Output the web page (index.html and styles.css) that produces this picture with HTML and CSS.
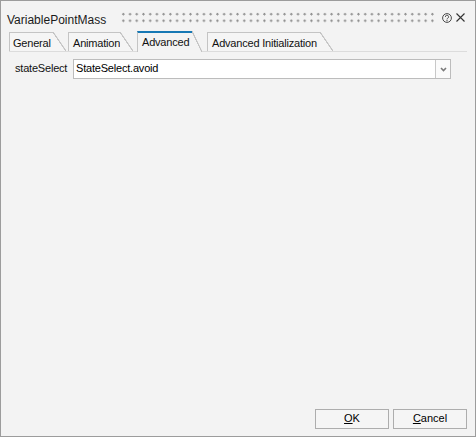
FILE: index.html
```html
<!DOCTYPE html>
<html>
<head>
<meta charset="utf-8">
<link rel="stylesheet" href="styles.css">
</head>
<body>
<div class="window">
  <div class="titlebar">
    <div class="title">VariablePointMass</div>
    <div class="grip"></div>
    <svg class="help" width="10" height="10" viewBox="0 0 10 10">
      <circle cx="5" cy="5" r="4.4" fill="none" stroke="#4a4a4a" stroke-width="1"/>
      <path d="M3.4 3.9 A1.6 1.6 0 1 1 5.6 5.3 C5.1 5.6 5 5.9 5 6.4" fill="none" stroke="#4a4a4a" stroke-width="1"/>
      <circle cx="5" cy="7.7" r="0.65" fill="#4a4a4a"/>
    </svg>
    <svg class="close" width="9" height="9" viewBox="0 0 9 9">
      <path d="M0.5 0.5 L8.5 8.5 M8.5 0.5 L0.5 8.5" stroke="#333" stroke-width="1.1" fill="none"/>
    </svg>
  </div>
  <div class="tabs">
    <div class="tab tab-general">General</div>
    <div class="tab tab-animation">Animation</div>
    <div class="tab tab-advanced selected">Advanced</div>
    <div class="tab tab-init">Advanced Initialization</div>
  </div>
  <div class="content">
    <div class="field">
      <div class="label">stateSelect</div>
      <div class="combo">
        <div class="combo-text">StateSelect.avoid</div>
        <div class="combo-btn">
          <svg width="7" height="5" viewBox="0 0 7 5">
            <path d="M1 1 L3.5 3.5 L6 1" fill="none" stroke="#7a7a7a" stroke-width="1.6"/>
          </svg>
        </div>
      </div>
    </div>
  </div>
  <div class="footer">
    <div class="btn"><u>O</u>K</div>
    <div class="btn"><u>C</u>ancel</div>
  </div>
</div>
</body>
</html>
```

FILE: styles.css
```css
html, body {
  margin: 0;
  padding: 0;
  background: #f3f3f3;
}

.window {
  box-sizing: border-box;
  width: 476px;
  height: 437px;
  border: 1px solid #9c9c9c;
  background: #f3f3f3;
  display: flex;
  flex-direction: column;
  font-family: "Liberation Sans", Arial, sans-serif;
  color: #000;
}

/* Title bar */
.titlebar {
  display: flex;
  align-items: flex-start;
  padding: 10px 10px 0 6px;
  height: 16px;
}

.title {
  flex: none;
  margin-top: 2px;
  font-size: 12px;
  line-height: 14px;
  color: #1a1a1a;
}

.grip {
  flex: 1;
  height: 13px;
  margin-left: 14px;
  background-image: radial-gradient(circle, #8e8e8e 0.9px, rgba(142,142,142,0) 1.4px);
  background-size: 6.67px 6.4px;
  background-repeat: space space;
}

.help {
  flex: none;
  margin-top: 2px;
  margin-left: 6px;
}

.close {
  flex: none;
  margin-top: 2px;
  margin-left: 4px;
}

/* Tabs */
.tabs {
  display: flex;
  align-items: flex-end;
  height: 20px;
  margin: 4px 8px 0 8px;
  border-bottom: 1px solid #dcdcdc;
  font-size: 11px;
  letter-spacing: -0.2px;
}

.tab {
  position: relative;
  box-sizing: border-box;
  height: 19px;
  padding: 2px 0 0 4px;
  line-height: 16px;
  border-left: 1px solid #c4c4c4;
  border-top: 1px solid #c4c4c4;
  background: #f5f5f5;
  white-space: nowrap;
  color: #111;
}

.tab::after {
  content: "";
  position: absolute;
  left: 100%;
  top: -1px;
  width: 13px;
  height: calc(100% + 1px);
  background: linear-gradient(to top right,
    #f5f5f5 calc(50% - 0.8px),
    #c4c4c4 calc(50% - 0.5px),
    #c4c4c4 calc(50% + 0.3px),
    rgba(196,196,196,0) calc(50% + 0.8px));
}

.tab-general {
  width: 44px;
  margin-right: 15px;
  padding-left: 3px;
}

.tab-animation {
  width: 52px;
  margin-right: 17px;
}

.tab-advanced {
  width: 55px;
  margin-right: 15px;
}

.tab-advanced::after {
  width: 10px;
}

.tab-init {
  width: 113px;
}

.tab.selected {
  z-index: 1;
  height: 21px;
  margin-bottom: -1px;
  padding-top: 1px;
  padding-bottom: 2px;
  border-top: 2px solid #1678b4;
  background: #f3f3f3;
}

.tab.selected::after {
  top: -2px;
  height: calc(100% + 2px);
  background: linear-gradient(to top right,
    #f3f3f3 calc(50% - 0.8px),
    #c4c4c4 calc(50% - 0.5px),
    #c4c4c4 calc(50% + 0.3px),
    rgba(196,196,196,0) calc(50% + 0.8px));
}

/* Content */
.content {
  flex: 1;
  padding: 7px 24px 0 14px;
  font-size: 11px;
  letter-spacing: -0.2px;
}

.field {
  display: flex;
  align-items: flex-start;
}

.label {
  flex: none;
  width: 58px;
  padding-top: 1px;
  line-height: 17px;
  color: #111;
}

.combo {
  flex: 1;
  display: flex;
  box-sizing: border-box;
  height: 20px;
  border: 1px solid #bcbcbc;
  background: #fff;
}

.combo-text {
  flex: 1;
  padding-left: 2px;
  line-height: 17px;
  color: #000;
}

.combo-btn {
  flex: none;
  width: 14px;
  border-left: 1px solid #c8c8c8;
  background: #fbfbfb;
  display: flex;
  align-items: center;
  justify-content: center;
}

.combo-btn svg {
  display: block;
  margin-left: 1px;
}

/* Footer */
.footer {
  display: flex;
  justify-content: flex-end;
  gap: 4px;
  padding: 0 8px 7px 0;
}

.btn {
  box-sizing: border-box;
  width: 74px;
  height: 20px;
  border: 1px solid #adadad;
  background: #f5f5f5;
  text-align: center;
  font-size: 11px;
  line-height: 16px;
  padding-bottom: 2px;
  color: #000;
}

.btn u {
  text-decoration: underline;
  text-underline-offset: 1px;
}
```
